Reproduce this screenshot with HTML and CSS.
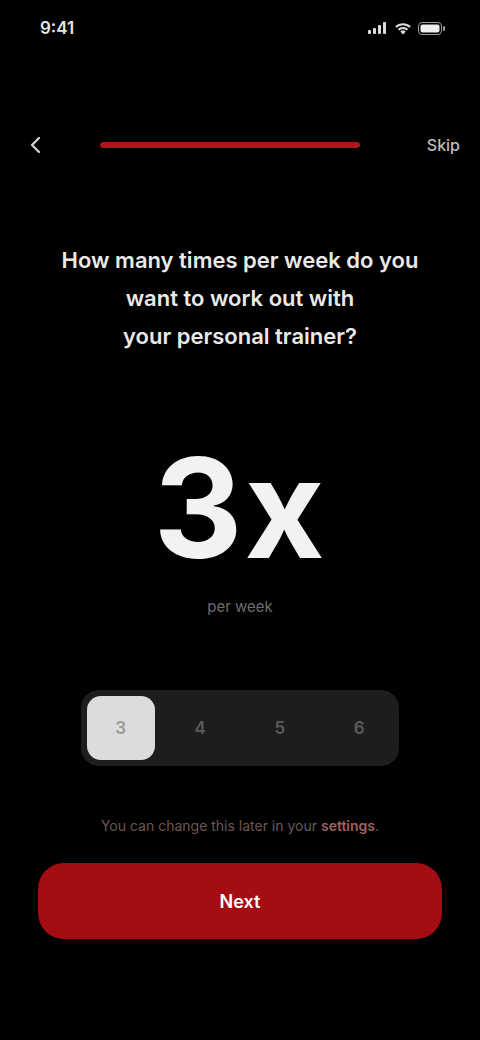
FILE: index.html
```html
<!DOCTYPE html>
<html lang="en">
<head>
<meta charset="utf-8">
<title>Training frequency</title>
<link rel="stylesheet" href="styles.css">
</head>
<body>
<div class="screen">
  <div class="status">
    <span class="time">9:41</span>
    <span class="status-icons">
      <svg width="20" height="12" viewBox="0 0 20 12"><rect x="0" y="8" width="3" height="4" rx="1" fill="#ddd"/><rect x="5" y="6" width="3" height="6" rx="1" fill="#ddd"/><rect x="10" y="3" width="3" height="9" rx="1" fill="#ddd"/><rect x="15" y="0" width="3" height="12" rx="1" fill="#ddd"/></svg>
      <svg width="18" height="13" viewBox="0 0 18 13"><path d="M9 12.5 6.3 9.6a3.8 3.8 0 0 1 5.4 0z" fill="#ddd"/><path d="M3.8 7.1a7.3 7.3 0 0 1 10.4 0l-1.4 1.4a5.3 5.3 0 0 0-7.6 0z" fill="#ddd"/><path d="M1.2 4.4a11 11 0 0 1 15.6 0l-1.4 1.4a9 9 0 0 0-12.8 0z" fill="#ddd"/></svg>
      <svg width="28" height="13" viewBox="0 0 28 13"><rect x="0.5" y="0.5" width="23" height="12" rx="3.5" fill="none" stroke="#999"/><rect x="2.5" y="2.5" width="19" height="8" rx="2" fill="#eee"/><rect x="25" y="4" width="2" height="5" rx="1" fill="#999"/></svg>
    </span>
  </div>

  <div class="nav">
    <span class="back">
      <svg width="24" height="24" viewBox="0 0 24 24"><path d="M15 5 8 12l7 7" fill="none" stroke="#cfcfcf" stroke-width="2.4" stroke-linecap="round" stroke-linejoin="round"/></svg>
    </span>
    <div class="progress"><div class="progress-fill" style="width: 100%"></div></div>
    <span class="skip">Skip</span>
  </div>

  <h1 class="heading">How many times per week do you<br>want to work out with<br>your personal trainer?</h1>

  <div class="big">3x</div>
  <div class="sub">per week</div>

  <div class="selector">
    <div class="opt selected">3</div>
    <div class="opt">4</div>
    <div class="opt">5</div>
    <div class="opt">6</div>
  </div>

  <p class="caption">You can change this later in your <span class="link">settings</span>.</p>

  <button class="cta">Next</button>
</div>
</body>
</html>
```
FILE: styles.css
```css
* { box-sizing: border-box; }
html, body { margin: 0; padding: 0; background: #000; }
body { font-family: Inter, "Noto Sans", "Liberation Sans", sans-serif; color: #fff; }
.screen { width: 480px; height: 1040px; display: flex; flex-direction: column; align-items: center; }

.status { width: 100%; height: 56px; padding: 0 34px 0 40px; display: flex; align-items: center; justify-content: space-between; }
.time { font-size: 17px; font-weight: 600; color: #e6e6e6; }
.status-icons { display: flex; align-items: center; gap: 6px; }

.nav { width: 100%; height: 50px; margin-top: 64px; display: flex; align-items: center; padding: 0 20px 0 24px; }
.back { width: 26px; height: 24px; display: flex; align-items: center; }
.progress { flex: 1; height: 6px; margin: 0 56px 0 50px; background: #2a0a0a; border-radius: 3px; overflow: hidden; }
.progress-fill { height: 100%; background: #b3141a; border-radius: 3px; }
.skip { font-size: 16px; font-weight: 500; color: #bdbdbd; width: 44px; text-align: right; }

.heading { margin: 71px 0 0; font-size: 22px; line-height: 38px; font-weight: 600; text-align: center; color: #e9e9e9; }

.big { margin-top: 83px; font-size: 138px; line-height: 140px; font-weight: 700; color: #f2f2f2; letter-spacing: 2px; }
.sub { margin-top: 19px; font-size: 15px; line-height: 20px; color: #6e6e6e; }

.selector { margin-top: 73px; width: 318px; height: 76px; padding: 6px; background: #1d1d1d; border-radius: 18px; display: grid; grid-template-columns: repeat(4, 1fr); gap: 12px; }
.opt { display: flex; align-items: center; justify-content: center; font-size: 17px; font-weight: 600; color: #5a5a5a; border-radius: 14px; }
.opt.selected { background: #dcdcdc; color: #9a9a9a; }

.caption { margin: 50px 0 0; font-size: 14px; line-height: 20px; color: #6a5858; }
.link { color: #a06060; font-weight: 600; }

.cta { margin-top: 27px; width: 404px; height: 76px; border: none; border-radius: 26px; background: #a40d12; color: #fff; font-family: inherit; font-size: 18px; font-weight: 600; }
```
